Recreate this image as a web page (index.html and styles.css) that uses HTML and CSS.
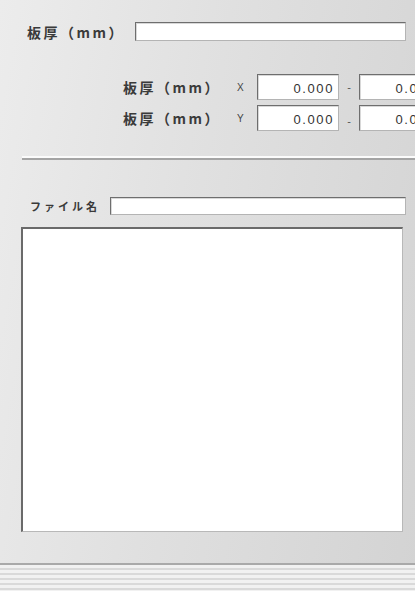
FILE: index.html
```html
<!DOCTYPE html>
<html lang="ja">

<head>
    <meta charset="UTF-8">
    <meta name="viewport" content="width=device-width, initial-scale=1.0">
    <title>板厚設定</title>
    <link rel="stylesheet" href="styles.css">
</head>

<body>
    <div class="panel">
        <div class="row-top">
            <span class="label label-top">板厚（mm）</span>
            <input class="field field-top" type="text">
        </div>

        <div class="range">
            <div class="range-row">
                <span class="label label-range">板厚（mm）</span>
                <span class="axis">X</span>
                <input class="field field-num" type="text" value="0.000">
                <span class="dash">-</span>
                <input class="field field-num" type="text" value="0.000">
            </div>
            <div class="range-row">
                <span class="label label-range">板厚（mm）</span>
                <span class="axis">Y</span>
                <input class="field field-num" type="text" value="0.000">
                <span class="dash dash-low">-</span>
                <input class="field field-num" type="text" value="0.000">
            </div>
        </div>

        <div class="sep"></div>

        <div class="file-row">
            <span class="label label-file">ファイル名</span>
            <input class="field field-file" type="text">
        </div>

        <textarea class="memo"></textarea>
    </div>

    <div class="footer"></div>
</body>

</html>
```

FILE: styles.css
```css
html, body {
    margin: 0;
    height: 100%;
}

body {
    background: linear-gradient(100deg, #ececec 0%, #e0e0e0 45%, #d3d3d3 100%);
    font-family: "Noto Sans CJK JP", "Noto Sans", sans-serif;
    color: #3a3a3a;
    overflow: hidden;
    width: 415px;
}

.panel {
    padding-top: 22px;
    height: 563px;
    box-sizing: border-box;
}

.label {
    font-weight: bold;
    white-space: nowrap;
    flex-shrink: 0;
}

.field {
    box-sizing: border-box;
    margin: 0;
    flex-shrink: 0;
    background: #fff;
    border: 1px solid;
    border-color: #6e6e6e #b4b4b4 #b4b4b4 #6e6e6e;
    box-shadow: inset 1px 1px 0 #d8d8d8;
    outline: none;
    font-family: "Liberation Sans", Arial, sans-serif;
}

/* top row */
.row-top {
    display: flex;
    align-items: center;
    margin-left: 27px;
    height: 19px;
}

.label-top {
    width: 108px;
    font-size: 14px;
    letter-spacing: 2.5px;
}

.field-top {
    width: 271px;
    height: 19px;
}

/* range rows */
.range {
    margin-top: 33px;
    padding-left: 123px;
    display: flex;
    flex-direction: column;
    gap: 5px;
    overflow: hidden;
}

.range-row {
    display: flex;
    align-items: center;
    height: 26px;
}

.label-range {
    width: 114px;
    font-size: 14px;
    letter-spacing: 2.5px;
}

.axis {
    width: 20px;
    flex-shrink: 0;
    font-family: "Liberation Sans", Arial, sans-serif;
    font-size: 10px;
    color: #444;
}

.field-num {
    width: 82px;
    height: 26px;
    text-align: right;
    padding: 2px 4px 0 0;
    font-size: 13px;
    letter-spacing: 1.6px;
    color: #333;
}

.dash {
    width: 20px;
    flex-shrink: 0;
    text-align: center;
    font-family: "Liberation Sans", Arial, sans-serif;
    font-size: 11px;
    color: #555;
}

.dash-low {
    padding-top: 6px;
}

/* separator */
.sep {
    margin: 25px 0 0 22px;
    border-top: 2px solid #fbfbfb;
    border-bottom: 2px solid #a4a4a4;
}

/* file name */
.file-row {
    display: flex;
    align-items: center;
    margin: 37px 0 0 30px;
    height: 18px;
}

.label-file {
    width: 80px;
    font-size: 11px;
    letter-spacing: 3px;
}

.field-file {
    width: 296px;
    height: 18px;
}

.memo {
    display: block;
    box-sizing: border-box;
    margin: 12px 0 0 21px;
    width: 382px;
    height: 305px;
    background: #fff;
    border: 1px solid;
    border-width: 2px 1px 1px 2px;
    border-color: #6a6a6a #b8b8b8 #b8b8b8 #6a6a6a;
    resize: none;
    outline: none;
}

.footer {
    height: 28px;
    border-top: 2px solid #a9a9a9;
    background: repeating-linear-gradient(to bottom, #f1f1f1 0, #f1f1f1 3px, #d9d9d9 3px, #d9d9d9 5px);
}
```
